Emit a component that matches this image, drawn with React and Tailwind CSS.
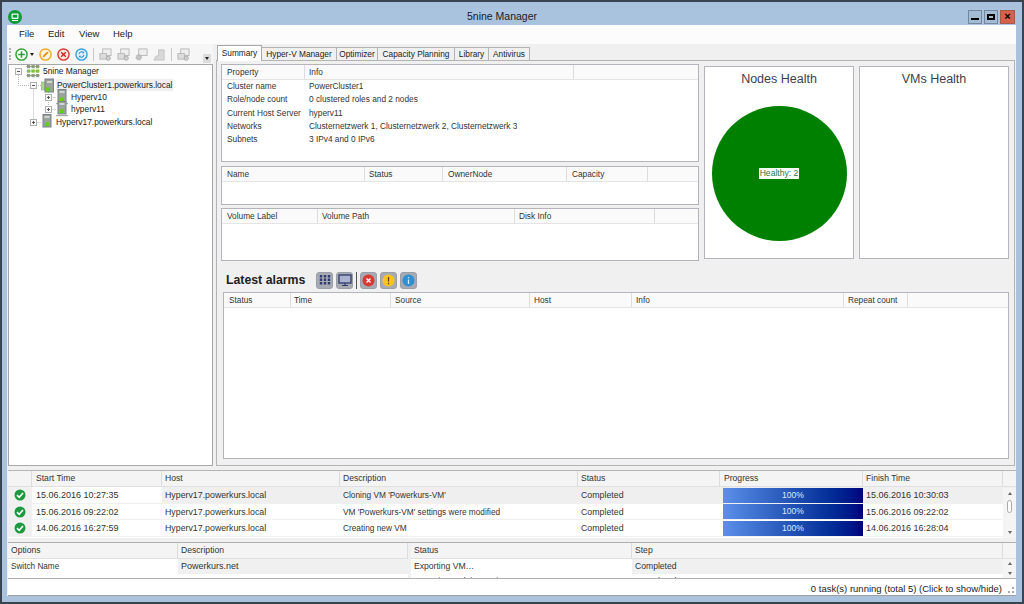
import React from "react";

const font = { fontFamily: "'Liberation Sans', Arial, sans-serif" };

function ServerIcon({ stand }) {
  return (
    <svg width="12" height="16" viewBox="0 0 12 16" className="shrink-0">
      <rect x="2" y="0.5" width="8" height="12.5" fill="#9aa39a" stroke="#7a8288" />
      <rect x="3.5" y="2" width="5" height="2" fill="#d0d5d0" />
      <rect x="4" y="8.5" width="4" height="3.5" fill="#5fd016" />
      {stand && <rect x="0" y="14" width="12" height="1.2" fill="#a5aba5" />}
    </svg>
  );
}

function ClusterIcon() {
  return (
    <svg width="13" height="15" viewBox="0 0 13 15" className="shrink-0">
      <rect x="0" y="4" width="4" height="8" fill="#a9d98a" stroke="#8c9c8c" strokeWidth="0.6" />
      <rect x="4" y="1" width="8.5" height="13" fill="#9aa39a" stroke="#7a8288" />
      <rect x="6" y="3" width="5" height="2" fill="#d0d5d0" />
      <rect x="5" y="9.5" width="4" height="4" fill="#5fd016" />
    </svg>
  );
}

function RootIcon() {
  return (
    <svg width="14" height="14" viewBox="0 0 14 14" className="shrink-0">
      <path d="M0.5 2.5h13M0.5 7h13M0.5 11.5h13" stroke="#a0a89a" strokeWidth="1" />
      {[1, 5.5, 10].map((x) =>
        [1, 5.5, 10].map((y) => (
          <rect key={`${x}-${y}`} x={x} y={y} width="3.2" height="3.2" fill={y === 5.5 ? "#7fc241" : "#8d9c80"} />
        ))
      )}
    </svg>
  );
}

function Expander({ open }) {
  return (
    <span className="relative w-[7px] h-[7px] border border-[#b0b0b0] bg-[#f8f8f8] flex items-center justify-center shrink-0">
      <span className="w-[3px] h-px bg-[#555]" />
      {!open && <span className="absolute w-px h-[3px] bg-[#555]" />}
    </span>
  );
}

function TreeRow({ indent, open, icon, label, selected, className = "" }) {
  return (
    <div className={`flex items-center h-[12px] ${className}`} style={{ paddingLeft: indent }}>
      <Expander open={open} />
      <span className="w-[4px] shrink-0" />
      {icon}
      <span className={`ml-[2px] text-[8.4px] leading-[12px] text-[#222] px-px ${selected ? "bg-[#efefef]" : ""}`}>
        {label}
      </span>
    </div>
  );
}

function ToolCircle({ color, bg, children }) {
  return (
    <svg width="13" height="13" viewBox="0 0 14 14" className="shrink-0">
      <circle cx="7" cy="7" r="6" fill={bg} stroke={color} strokeWidth="1.5" />
      {children}
    </svg>
  );
}

// disabled toolbar icons, all in the same washed out grey
function GreyTool({ kind }) {
  return (
    <svg width="13" height="13" viewBox="0 0 14 14" className="shrink-0">
      {kind === "user" ? (
        <path d="M1 13 L3 9 L6 8 V2 H12 V13 Z" fill="#d8d8d8" stroke="#c4c4c4" />
      ) : (
        <>
          <rect x="4" y="1" width="9" height="7" fill="#efefef" stroke="#b8b8b8" />
          {kind === "gear" ? (
            <circle cx="4" cy="10" r="2.8" fill="#c4c4c4" stroke="#a0a0a0" strokeDasharray="1.5 1" />
          ) : (
            <>
              <rect x="1" y="6" width="7" height="6" fill="#dcdcdc" stroke="#b8b8b8" />
              <circle cx="10" cy="11" r="2.2" fill="#d0d0d0" stroke="#ababab" />
            </>
          )}
        </>
      )}
    </svg>
  );
}

function HeaderCell({ children, className = "", pad = "pl-[5px]", size = "text-[8.3px]" }) {
  return (
    <div className={`border-r border-[#dcdcdc] truncate leading-[15px] text-[#333] ${pad} ${size} ${className}`}>
      {children}
    </div>
  );
}

function AlarmButton({ children }) {
  return (
    <span className="w-[17px] h-[17px] rounded-[3px] bg-[#a6aab2] border border-[#9a9ea6] flex items-center justify-center">
      {children}
    </span>
  );
}

function Check() {
  return (
    <svg width="12" height="12" viewBox="0 0 12 12">
      <circle cx="6" cy="6" r="5.5" fill="#1d9a3f" />
      <path d="M3 6.2 L5.2 8.3 L9 4" stroke="#fff" strokeWidth="1.6" fill="none" />
    </svg>
  );
}

const props = [
  ["Cluster name", "PowerCluster1"],
  ["Role/node count", "0 clustered roles and 2 nodes"],
  ["Current Host Server", "hyperv11"],
  ["Networks", "Clusternetzwerk 1, Clusternetzwerk 2, Clusternetzwerk 3"],
  ["Subnets", "3 IPv4 and 0 IPv6"],
];

const tasks = [
  ["15.06.2016 10:27:35", "Cloning VM 'Powerkurs-VM'", "15.06.2016 10:30:03"],
  ["15.06.2016 09:22:02", "VM 'Powerkurs-VM' settings were modified", "15.06.2016 09:22:02"],
  ["14.06.2016 16:27:59", "Creating new VM", "14.06.2016 16:28:04"],
];

const tabs = [
  ["Hyper-V Manager", "w-[75px]"],
  ["Optimizer", "w-[41px]"],
  ["Capacity Planning", "w-[77px]"],
  ["Library", "w-[34px]"],
  ["Antivirus", "w-[41px]"],
];
const taskCols = "grid grid-cols-[24px_130px_178px_238px_142px_143px_140px_13px]";

export default function App() {
  return (
    <div style={font} className="w-[1024px] h-[604px] overflow-hidden bg-[#a9c3df] border-2 border-[#3a4450] flex flex-col">
      {/* title bar */}
      <div className="h-[23px] flex items-center pl-[6px] pr-[7px] pt-[6px] shrink-0">
        <svg width="14" height="14" viewBox="0 0 14 14" className="shrink-0">
          <circle cx="7" cy="7" r="7" fill="#0f9d3a" />
          <rect x="3.5" y="3.5" width="7" height="5.5" rx="1" fill="#fff" />
          <rect x="4.7" y="4.7" width="4.6" height="3" fill="#0f9d3a" />
          <rect x="4" y="10" width="6" height="1" fill="#fff" />
        </svg>
        <div className="flex-1 text-center text-[10.5px] text-[#1a1a1a] pl-[14px]">5nine Manager</div>
        <div className="flex gap-[2px]">
          <span className="w-[14px] h-[14px] border border-[#75879c] bg-[#a3bcd6] flex items-end justify-center pb-[3px]">
            <span className="w-[8px] h-[2px] bg-black" />
          </span>
          <span className="w-[14px] h-[14px] border border-[#75879c] bg-[#a3bcd6] flex items-center justify-center">
            <span className="w-[8px] h-[6px] border-2 border-black" />
          </span>
          <span className="w-[15px] h-[14px] border border-[#a65a4a] bg-[#d5604c] flex items-center justify-center text-[11px] leading-none font-bold text-black">
            ×
          </span>
        </div>
      </div>

      {/* client area */}
      <div className="ml-[5px] mr-[6px] h-[571px] bg-[#f0f0f0] flex flex-col">
        <div className="h-[19px] bg-[#fcfcfc] flex items-center text-[9.5px] text-[#222] pl-[12px] shrink-0">
          <span className="w-[29px]">File</span>
          <span className="w-[31px]">Edit</span>
          <span className="w-[34px]">View</span>
          <span>Help</span>
        </div>

        <div className="h-[422px] flex shrink-0">
          {/* left column */}
          <div className="w-[205px] ml-px flex flex-col shrink-0">
            <div className="h-[20px] bg-[#f6f6f6] flex items-center pl-[7px] relative shrink-0">
              <span className="absolute left-[1px] top-[4px] h-[12px] w-[2px] border-l-2 border-dotted border-[#b0b0b0]" />
              <ToolCircle color="#2f9e2f" bg="#fff">
                <path d="M7 3.5v7M3.5 7h7" stroke="#2f9e2f" strokeWidth="1.6" />
              </ToolCircle>
              <span className="w-0 h-0 ml-[2px] mr-[5px] border-l-[2px] border-r-[2px] border-t-[3px] border-l-transparent border-r-transparent border-t-[#222]" />
              <span className="flex items-center gap-[5px]">
                <ToolCircle color="#f0a92a" bg="#fff4d8">
                  <path d="M4.5 9.5 L9.5 4.5" stroke="#e08a10" strokeWidth="1.8" />
                </ToolCircle>
                <ToolCircle color="#d93a30" bg="#fbe3e0">
                  <path d="M4.5 4.5l5 5M9.5 4.5l-5 5" stroke="#c8281e" strokeWidth="1.5" />
                </ToolCircle>
                <ToolCircle color="#3aa0dc" bg="#e0f2fc">
                  <path d="M4.2 6.5a3 3 0 0 1 5-1.5M9.8 7.5a3 3 0 0 1-5 1.5" stroke="#2590cf" strokeWidth="1.1" fill="none" />
                  <path d="M9.8 3.5v2.2H7.6M4.2 10.5V8.3h2.2" fill="#2590cf" />
                </ToolCircle>
                <span className="w-px h-[13px] bg-[#c8c8c8]" />
                <GreyTool />
                <GreyTool />
                <GreyTool kind="gear" />
                <GreyTool kind="user" />
                <span className="w-px h-[13px] bg-[#c8c8c8]" />
                <GreyTool />
              </span>
              <span className="absolute right-[2px] bottom-[1px] w-[8px] h-[9px] bg-[#dcdcdc] flex items-center justify-center">
                <span className="w-0 h-0 border-l-[2px] border-r-[2px] border-t-[3px] border-l-transparent border-r-transparent border-t-[#222]" />
              </span>
            </div>
            <div className="relative h-[402px] bg-white border border-[#a8a8a8]">
              <svg className="absolute left-0 top-0" width="60" height="70">
                <path d="M9.5 10V20.5H32M24.5 20.5V57.5M24.5 57.5H32M39.5 25V44.5M39.5 32.5H47M39.5 44.5H47" stroke="#b8b8b8" strokeDasharray="1 1" fill="none" />
              </svg>
              <div className="relative">
                <TreeRow indent={6} open icon={<RootIcon />} label="5nine Manager" />
                <TreeRow indent={21} open icon={<ClusterIcon />} label="PowerCluster1.powerkurs.local" selected className="mt-[2px]" />
                <TreeRow indent={36} icon={<ServerIcon stand />} label="Hyperv10" />
                <TreeRow indent={36} icon={<ServerIcon stand />} label="hyperv11" />
                <TreeRow indent={21} icon={<ServerIcon />} label="Hyperv17.powerkurs.local" className="mt-px" />
              </div>
            </div>
          </div>

          {/* tabs */}
          <div className="flex-1 ml-[3px] mr-px flex flex-col min-w-0">
            <div className="h-[16px] flex items-end text-[8.3px] text-[#222] pl-px shrink-0 relative z-10">
              <span className="h-[16px] w-[45px] text-center bg-white border border-b-0 border-[#a8a8a8] leading-[14px] -mb-px">Summary</span>
              {tabs.map(([t, w]) => (
                <span key={t} className={`h-[13px] ${w} text-center bg-[#f0f0f0] border border-l-0 border-b-0 border-[#b4b4b4] leading-[13px]`}>
                  {t}
                </span>
              ))}
            </div>
            <div className="flex-1 bg-[#f0f0f0] border border-[#b4b4b4] pl-[4px] pt-[3px] pr-[4px]">
              <div className="flex h-[197px]">
                <div className="w-[478px] flex flex-col shrink-0">
                  <div className="h-[98px] bg-white border border-[#b4b4bc] text-[8.3px] text-[#333]">
                    <div className="flex h-[15px] bg-[#fafafa] border-b border-[#e4e4e4]">
                      <HeaderCell className="w-[83px]">Property</HeaderCell>
                      <HeaderCell pad="pl-[4px]" className="w-[269px]">Info</HeaderCell>
                    </div>
                    {props.map(([k, v]) => (
                      <div key={k} className="flex h-[13.3px] leading-[13px]">
                        <span className="w-[82px] pl-[5px] whitespace-nowrap shrink-0">{k}</span>
                        <span className="pl-[5px] truncate">{v}</span>
                      </div>
                    ))}
                  </div>
                  <div className="h-[39px] mt-[4px] bg-white border border-[#b4b4bc]">
                    <div className="flex h-[15px] bg-[#fafafa] border-b border-[#e4e4e4]">
                      <HeaderCell className="w-[143px]">Name</HeaderCell>
                      <HeaderCell pad="pl-[4px]" className="w-[78px]">Status</HeaderCell>
                      <HeaderCell className="w-[124px]">OwnerNode</HeaderCell>
                      <HeaderCell className="w-[81px]">Capacity</HeaderCell>
                    </div>
                  </div>
                  <div className="h-[53px] mt-[3px] bg-white border border-[#b4b4bc]">
                    <div className="flex h-[15px] bg-[#fafafa] border-b border-[#e4e4e4]">
                      <HeaderCell className="w-[96px]">Volume Label</HeaderCell>
                      <HeaderCell pad="pl-[4px]" className="w-[197px]">Volume Path</HeaderCell>
                      <HeaderCell pad="pl-[4px]" className="w-[140px]">Disk Info</HeaderCell>
                    </div>
                  </div>
                </div>
                <div className="ml-[5px] mt-[2px] w-[150px] h-[193px] bg-white border border-[#b4b4bc] flex flex-col items-center shrink-0">
                  <div className="text-[12.5px] leading-[16px] text-[#3a3f50] mt-[4px]">Nodes Health</div>
                  <div className="w-[135px] h-[135px] rounded-full bg-[#008000] mt-[19px] flex items-center justify-center">
                    <span className="bg-white text-[8.6px] leading-[11px] px-[1px] text-[#1f7a3f]">Healthy: 2</span>
                  </div>
                </div>
                <div className="ml-[5px] mt-[2px] w-[150px] h-[193px] bg-white border border-[#b4b4bc] flex flex-col items-center shrink-0">
                  <div className="text-[12.5px] leading-[16px] text-[#3a3f50] mt-[4px]">VMs Health</div>
                </div>
              </div>

              <div className="h-[31px] flex items-center pl-[5px] pt-[7px]">
                <span className="text-[12.3px] font-bold text-[#222]">Latest alarms</span>
                <span className="ml-[11px] flex items-center gap-[3px]">
                  <AlarmButton>
                    <svg width="12" height="12" viewBox="0 0 12 12">
                      <path d="M2 1v10M6 1v10M10 1v10" stroke="#2f3a6a" strokeWidth="2.4" strokeDasharray="2.5 1" />
                    </svg>
                  </AlarmButton>
                  <AlarmButton>
                    <svg width="14" height="13" viewBox="0 0 14 13">
                      <rect x="1" y="1" width="12" height="8" fill="#aab2d0" stroke="#2f3a6a" strokeWidth="1.3" />
                      <path d="M7 9v2M4 11.5h6" stroke="#2f3a6a" strokeWidth="1.2" />
                    </svg>
                  </AlarmButton>
                  <span className="w-px h-[17px] bg-[#555]" />
                  <AlarmButton>
                    <svg width="13" height="13" viewBox="0 0 13 13">
                      <circle cx="6.5" cy="6.5" r="6" fill="#d63a34" />
                      <path d="M4.5 4.5l4 4M8.5 4.5l-4 4" stroke="#fff" strokeWidth="1.3" />
                    </svg>
                  </AlarmButton>
                  <AlarmButton>
                    <svg width="13" height="13" viewBox="0 0 13 13">
                      <circle cx="6.5" cy="6.5" r="6" fill="#f7c31c" />
                      <path d="M6.5 3v4.5M6.5 8.8v1.4" stroke="#5a4300" strokeWidth="1.2" />
                    </svg>
                  </AlarmButton>
                  <AlarmButton>
                    <svg width="13" height="13" viewBox="0 0 13 13">
                      <circle cx="6.5" cy="6.5" r="6" fill="#2f8fd0" />
                      <path d="M6.5 3v1.3M6.5 5.5v4.5" stroke="#d8ecf8" strokeWidth="1.3" />
                    </svg>
                  </AlarmButton>
                </span>
              </div>

              <div className="ml-[2px] w-[786px] h-[167px] bg-white border border-[#b4b4bc]">
                <div className="flex h-[15px] bg-[#fafafa] border-b border-[#e4e4e4]">
                  <HeaderCell className="w-[67px]">Status</HeaderCell>
                  <HeaderCell pad="pl-[3px]" className="w-[100px]">Time</HeaderCell>
                  <HeaderCell pad="pl-[4px]" className="w-[139px]">Source</HeaderCell>
                  <HeaderCell pad="pl-[4px]" className="w-[102px]">Host</HeaderCell>
                  <HeaderCell pad="pl-[4px]" className="w-[212px]">Info</HeaderCell>
                  <HeaderCell pad="pl-[4px]" className="w-[64px]">Repeat count</HeaderCell>
                </div>
              </div>
            </div>
          </div>
        </div>

        {/* running tasks */}
        <div className="mt-[4px] ml-px h-[68px] bg-white border-t border-[#b4b4b4] shrink-0 relative">
          <div className={`${taskCols} h-[16px] bg-[#f4f4f4] border-b border-[#e0e0e0] items-center`}>
            <div className="border-r border-[#dcdcdc] h-full" />
            <HeaderCell pad="pl-[4px]" size="text-[8.6px]">Start Time</HeaderCell>
            <HeaderCell pad="pl-[3px]" size="text-[8.6px]">Host</HeaderCell>
            <HeaderCell pad="pl-[3px]" size="text-[8.6px]">Description</HeaderCell>
            <HeaderCell pad="pl-[3px]" size="text-[8.6px]">Status</HeaderCell>
            <HeaderCell pad="pl-[4px]" size="text-[8.6px]">Progress</HeaderCell>
            <HeaderCell pad="pl-[3px]" size="text-[8.6px]">Finish Time</HeaderCell>
            <div />
          </div>
          {tasks.map(([start, desc, finish], i) => (
            <div key={start} className={`${taskCols} h-[16.5px] items-center text-[9px] leading-[16px] text-[#333] ${i === 0 ? "bg-[#efefef]" : "bg-white"} border-b border-[#f0f0f0]`}>
              <div className="flex justify-center bg-[#f0f0f0] h-full items-center">
                <Check />
              </div>
              <div className={`pl-[4px] ${i === 0 ? "bg-white" : ""}`}>{start}</div>
              <div className="pl-[3px] text-[8.8px]">Hyperv17.powerkurs.local</div>
              <div className="pl-[3px] text-[8.3px] truncate">{desc}</div>
              <div className="pl-[3px] text-[8.8px]">Completed</div>
              <div className="h-[15px] ml-[3px] bg-gradient-to-r from-[#5b8fe8] to-[#000080] text-center text-[#dfe8f8] text-[8.6px] leading-[15px]">
                100%
              </div>
              <div className="pl-[3px]">{finish}</div>
              <div />
            </div>
          ))}
          <div className="absolute right-0 top-[17px] w-[13px] h-[50px] bg-[#f4f4f4] flex flex-col items-center justify-between py-[4px]">
            <span className="w-0 h-0 border-l-[2px] border-r-[2px] border-b-[3px] border-l-transparent border-r-transparent border-b-[#666]" />
            <span className="w-[5px] h-[13px] -mt-[14px] rounded-[3px] border border-[#aaa] bg-white" />
            <span className="w-0 h-0 border-l-[2px] border-r-[2px] border-t-[3px] border-l-transparent border-r-transparent border-t-[#666]" />
          </div>
        </div>

        {/* details */}
        <div className="mt-[4px] ml-px h-[37px] flex gap-[3px] shrink-0 border-b border-t border-[#b0b0b0]">
          <div className="w-[400px] bg-white overflow-hidden">
            <div className="flex h-[16px] bg-[#f4f4f4] border-b border-[#e0e0e0]">
              <HeaderCell pad="pl-[3px]" size="text-[8.6px]" className="w-[170px]">Options</HeaderCell>
              <HeaderCell pad="pl-[3px]" size="text-[8.6px]" className="w-[230px]">Description</HeaderCell>
            </div>
            <div className="flex h-[15px] text-[9px] leading-[15px] text-[#333]">
              <span className="w-[170px] pl-[3px] text-[8.2px]">Switch Name</span>
              <span className="w-[230px] pl-[3px] bg-[#f0f0f0]">Powerkurs.net</span>
            </div>
          </div>
          <div className="flex-1 bg-white overflow-hidden relative">
            <div className="flex h-[16px] bg-[#f4f4f4] border-b border-[#e0e0e0]">
              <HeaderCell pad="pl-[3px]" size="text-[8.6px]" className="w-[221px]">Status</HeaderCell>
              <HeaderCell pad="pl-[3px]" size="text-[8.6px]" className="w-[371px]">Step</HeaderCell>
            </div>
            <div className="flex h-[15px] text-[8.6px] leading-[15px] text-[#333]">
              <span className="w-[221px] pl-[3px]">Exporting VM…</span>
              <span className="pl-[3px] w-[371px] bg-[#f0f0f0]">Completed</span>
            </div>
            <div className="flex h-[15px] text-[8.6px] leading-[15px] text-[#333]">
              <span className="w-[221px] pl-[3px]">Powering task is running</span>
              <span className="pl-[3px]">Completed</span>
            </div>
            <div className="absolute right-0 top-[16px] bottom-0 w-[13px] bg-[#f4f4f4] flex flex-col items-center justify-between py-[3px]">
              <span className="w-0 h-0 border-l-[2px] border-r-[2px] border-b-[3px] border-l-transparent border-r-transparent border-b-[#666]" />
              <span className="w-0 h-0 border-l-[2px] border-r-[2px] border-t-[3px] border-l-transparent border-r-transparent border-t-[#666]" />
            </div>
          </div>
        </div>

        {/* status bar */}
        <div className="h-[17px] ml-px bg-white border-b border-[#a0a0a0] flex items-center justify-end pt-[4px] pr-[14px] text-[9.5px] text-[#222] shrink-0 relative">
          0 task(s) running (total 5) (Click to show/hide)
          <span className="absolute right-[2px] bottom-[2px] w-[6px] h-[6px] border-r-2 border-b-2 border-dotted border-[#a8a8a8]" />
        </div>
      </div>
    </div>
  );
}
